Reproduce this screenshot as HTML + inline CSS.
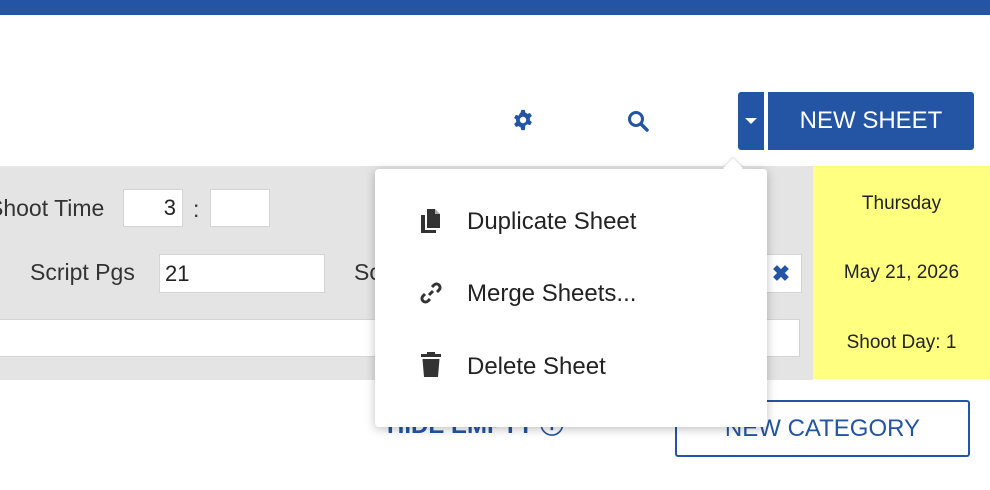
<!DOCTYPE html>
<html><head><style>
*{box-sizing:border-box;margin:0;padding:0}
body{width:990px;height:490px;overflow:hidden;background:#fff;font-family:"Liberation Sans",sans-serif;position:relative;color:#333}
.a{position:absolute}
.inp{position:absolute;background:#fff;border:1px solid #d4d4d4;font-size:22px;color:#222}
.lbl{position:absolute;font-size:23px;color:#333}
.mi{position:absolute;left:92px;font-size:24px;color:#222}
</style></head><body>
<div class="a" style="left:0;top:0;width:990px;height:15px;background:#2355a4"></div>
<svg class="a" style="left:512px;top:109px" width="22" height="22" viewBox="0 0 24 24"><path fill="#2355a4" d="M10 1h4l.6 3a8 8 0 0 1 2.2 1.3l2.9-1 2 3.4-2.3 2a8 8 0 0 1 0 2.6l2.3 2-2 3.4-2.9-1a8 8 0 0 1-2.200 1.3L14 23h-4l-.6-3a8 8 0 0 1-2.2-1.3l-2.9 1-2-3.4 2.3-2a8 8 0 0 1 0-2.6l-2.3-2 2-3.4 2.9 1A8 8 0 0 1 9.4 4zM12 8.5a3.5 3.5 0 1 0 0 7 3.5 3.5 0 0 0 0-7z"/></svg>
<svg class="a" style="left:626px;top:109px" width="24" height="24" viewBox="0 0 24 24"><circle cx="10" cy="10" r="6.5" fill="none" stroke="#2355a4" stroke-width="3"/><path d="M15 15l6 6" stroke="#2355a4" stroke-width="3.5" stroke-linecap="round"/></svg>
<div class="a" style="left:738px;top:92px;width:26px;height:58px;background:#2355a4;border-radius:3px 0 0 3px"></div>
<div class="a" style="left:745px;top:118px;width:0;height:0;border-left:6px solid transparent;border-right:6px solid transparent;border-top:6px solid #fff"></div>
<div class="a" style="left:768px;top:92px;width:206px;height:58px;background:#2355a4;border-radius:0 3px 3px 0;color:#fff;font-size:24px;text-align:center;line-height:58px">NEW SHEET</div>
<div class="a" style="left:0;top:166px;width:813px;height:214px;background:#e4e4e4"></div>
<div class="a" style="left:0;top:319px;width:800px;height:38px;background:#fff;border:1px solid #d4d4d4;border-left:none"></div>
<div class="lbl" style="left:-12px;top:195px">Shoot Time</div>
<div class="inp" style="left:123px;top:189px;width:60px;height:38px;text-align:right;padding-right:6px;line-height:36px">3</div>
<div class="lbl" style="left:193px;top:196px">:</div>
<div class="inp" style="left:210px;top:189px;width:60px;height:38px"></div>
<div class="lbl" style="left:30px;top:259px">Script Pgs</div>
<div class="inp" style="left:159px;top:254px;width:166px;height:39px;padding-left:5px;line-height:37px">21</div>
<div class="lbl" style="left:354px;top:259px">Sc</div>
<div class="inp" style="left:760px;top:254px;width:42px;height:39px;color:#2355a4;font-size:22px;text-align:center;line-height:37px;font-weight:bold">✖</div>
<div class="a" style="left:813px;top:166px;width:177px;height:213px;background:#ffff80;text-align:center;font-size:19px;color:#222">
<div class="a" style="top:27px;width:177px">Thursday</div>
<div class="a" style="top:96px;width:177px">May 21, 2026</div>
<div class="a" style="top:166px;width:177px">Shoot Day: 1</div>
</div>
<div class="a" style="left:387px;top:405px;font-size:24px;color:#2355a4;font-weight:bold">HIDE EMPTY ⓘ</div>
<div class="a" style="left:675px;top:400px;width:295px;height:57px;border:2px solid #2355a4;border-radius:3px;color:#2355a4;font-size:24px;text-align:center;line-height:53px">NEW CATEGORY</div>
<div class="a" style="left:375px;top:169px;width:392px;height:258px;background:#fff;border-radius:4px;box-shadow:0 2px 10px rgba(0,0,0,.25)">
<div class="a" style="left:351px;top:-8px;width:14px;height:14px;background:#fff;transform:rotate(45deg);box-shadow:-1px -1px 2px rgba(0,0,0,.12)"></div>
<svg class="a" style="left:46px;top:40px" width="20" height="24" viewBox="0 0 20 24"><path fill="#333" d="M6 0h8l5 5v14H6z"/><path fill="#fff" d="M14 0v5h5z" opacity=".6"/><path fill="#333" d="M0 6h4v15h11v3H0z"/></svg>
<div class="mi" style="top:39px">Duplicate Sheet</div>
<svg class="a" style="left:44px;top:112px" width="24" height="24" viewBox="0 0 24 24"><path fill="none" stroke="#333" stroke-width="3" d="M10 14l4-4M13 6l2-2a3.5 3.5 0 0 1 5 5l-2 2M11 18l-2 2a3.5 3.5 0 0 1-5-5l2-2"/></svg>
<div class="mi" style="top:111px">Merge Sheets...</div>
<svg class="a" style="left:46px;top:183px" width="20" height="25" viewBox="0 0 20 25"><path fill="#333" d="M6 0h8v2h6v3H0V2h6zM1.5 7h17l-1.5 18H3z"/></svg>
<div class="mi" style="top:184px">Delete Sheet</div>
</div>
</body></html>
